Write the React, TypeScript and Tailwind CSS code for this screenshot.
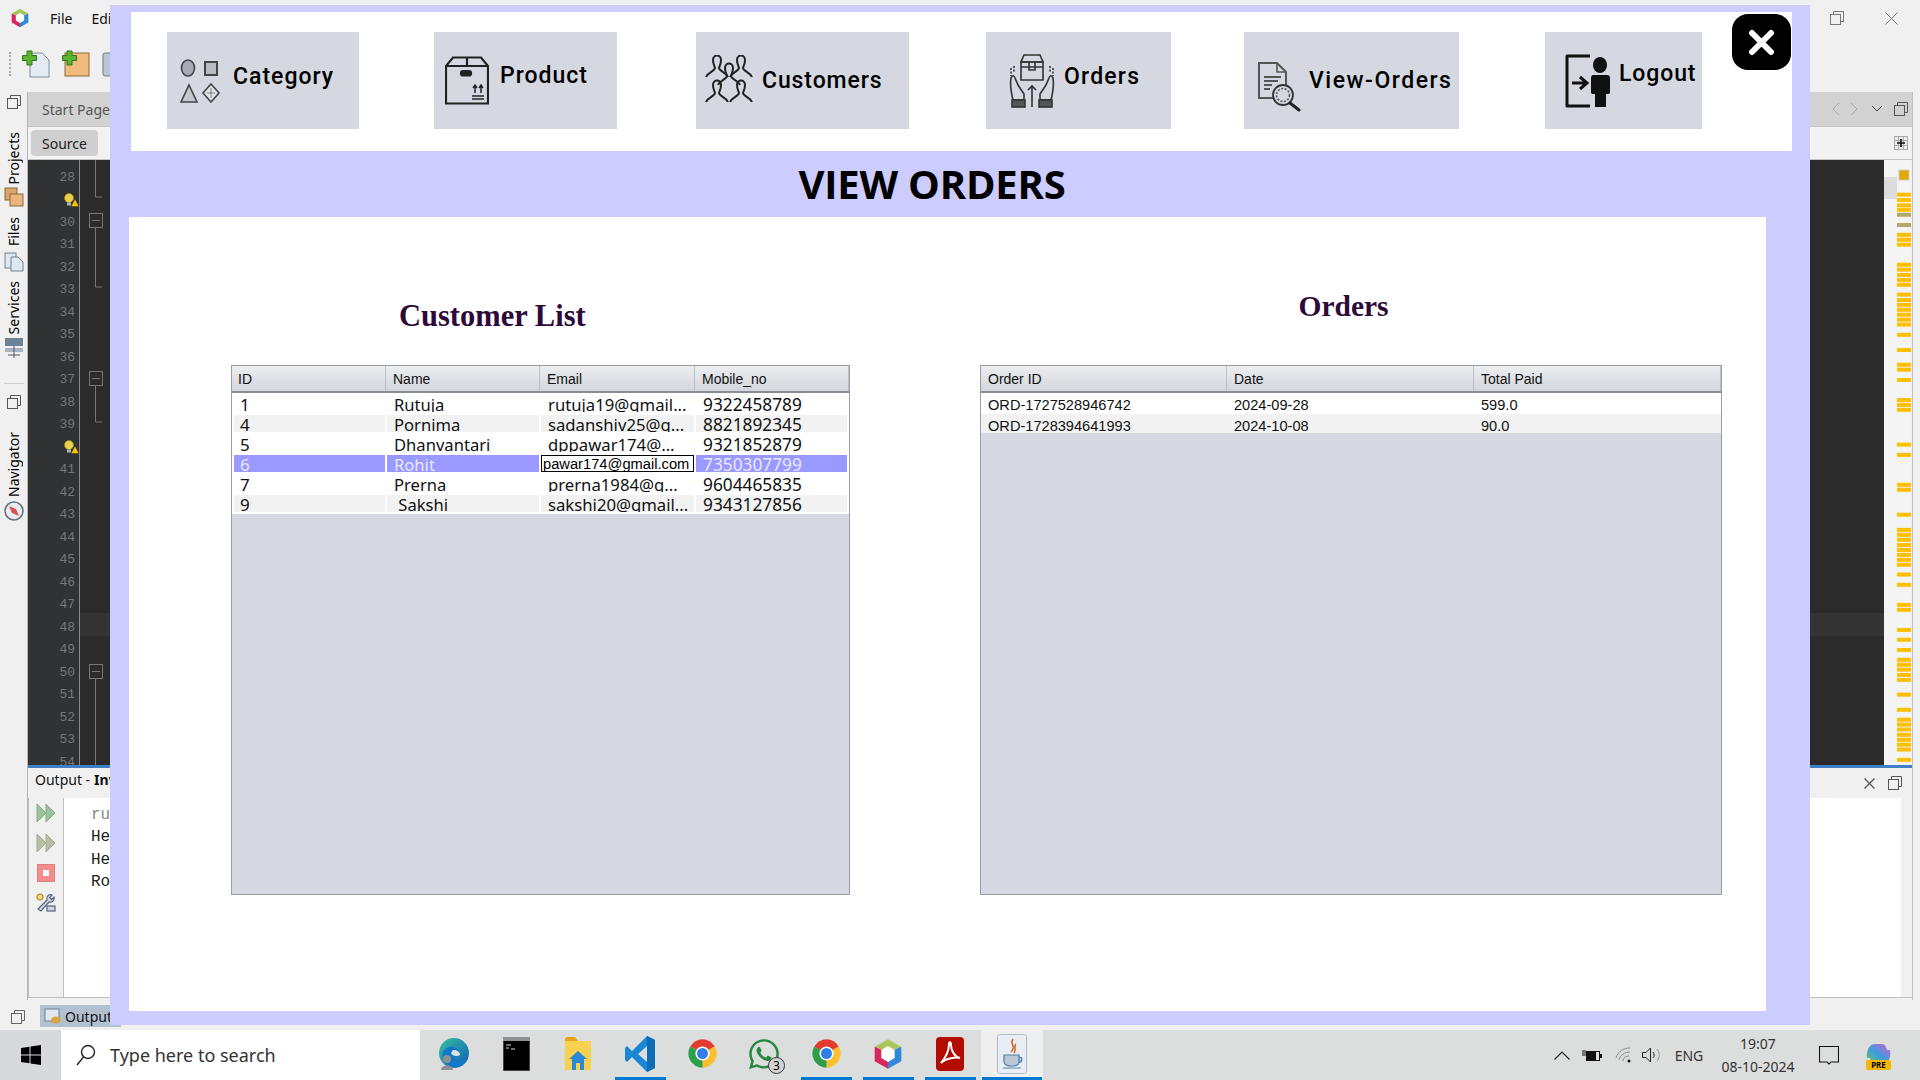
import React from "react";
import { FaWhatsapp } from "react-icons/fa";

const customers = [
  { id: "1", name: "Rutuja", email: "rutuja19@gmail...", mobile: "9322458789" },
  { id: "4", name: "Pornima", email: "sadanshiv25@g...", mobile: "8821892345" },
  { id: "5", name: "Dhanvantari", email: "dppawar174@...", mobile: "9321852879" },
  { id: "6", name: "Rohit", email: "pawar174@gmail.com", mobile: "7350307799" },
  { id: "7", name: "Prerna", email: "prerna1984@g...", mobile: "9604465835" },
  { id: "9", name: "\u00a0Sakshi", email: "sakshi20@gmail...", mobile: "9343127856" },
];

const orders = [
  { id: "ORD-1727528946742", date: "2024-09-28", paid: "599.0" },
  { id: "ORD-1728394641993", date: "2024-10-08", paid: "90.0" },
];

const lineNumbers = Array.from({ length: 27 }, (_, i) => 28 + i);

const stripes = [
  212, 224, 236, 246, 302, 313, 324, 369, 380, 392, 403, 414, 436, 448, 459, 470, 481, 492, 503, 526, 560, 593, 604,
  627, 672, 683, 694, 772, 795, 862, 873, 929, 963, 974, 985, 997, 1008, 1019, 1030, 1041, 1063, 1086, 1131, 1142,
  1187, 1209, 1232, 1254, 1265, 1276, 1288, 1299, 1332, 1366, 1388, 1399, 1410, 1422, 1433, 1444, 1455, 1478,
];

function RestoreIcon({ color = "#777" }: { color?: string }) {
  return (
    <svg width="14" height="14" viewBox="0 0 14 14" fill="none" stroke={color} strokeWidth="1">
      <rect x="0.5" y="3.5" width="10" height="10" />
      <path d="M3.5 3.5V0.5H13.5V10.5H10.5" />
    </svg>
  );
}

function NetBeansLogo({ size = 20 }: { size?: number }) {
  return (
    <svg width={size} height={size} viewBox="0 0 24 24">
      <path d="M12 1 22 6.5 12 11 2 6.5Z" fill="#a8c65a" />
      <path d="M2 6.5 12 11V23L2 17.5Z" fill="#d8275f" />
      <path d="M22 6.5 12 11V23L22 17.5Z" fill="#2f88d8" />
      <path d="M12 6 17 9 17 15 12 18 7 15 7 9Z" fill="#fff" />
    </svg>
  );
}

function Chrome() {
  return (
    <svg width="31" height="31" viewBox="0 0 48 48">
      <path d="M24 24 5 13A22 22 0 0 1 43 13Z" fill="#e33b2e" />
      <path d="M24 24 43 13A22 22 0 0 1 24 46Z" fill="#fbc02d" />
      <path d="M24 24 24 46A22 22 0 0 1 5 13Z" fill="#2e9e48" />
      <circle cx="24" cy="24" r="11" fill="#fff" />
      <circle cx="24" cy="24" r="8.5" fill="#2f7fe6" />
    </svg>
  );
}

function Bulb() {
  return (
    <svg width="15" height="14" viewBox="0 0 15 14">
      <circle cx="5" cy="5" r="4.5" fill="#e8d24a" stroke="#9b8a20" strokeWidth="0.6" />
      <rect x="3" y="9.5" width="4" height="3" fill="#aab0c0" />
      <path d="M11 6 15 13.5H7Z" fill="#f5c400" stroke="#222" strokeWidth="0.4" />
    </svg>
  );
}

function SideLabel({ text, className }: { text: string; className: string }) {
  return (
    <span className={`[writing-mode:vertical-rl] rotate-180 text-[14px] leading-[16px] text-black ${className}`}>
      {text}
    </span>
  );
}

function CategoryIcon() {
  return (
    <svg width="41" height="44" viewBox="0 0 41 44" fill="none" stroke="#444" strokeWidth="1.6">
      <ellipse cx="8" cy="9" rx="6.5" ry="8" fill="#a9acb4" />
      <rect x="25" y="3" width="12" height="13" fill="#b9bcc4" strokeWidth="2" />
      <path d="M9 26 17 43H1Z" fill="#c4c7cf" />
      <path d="M31 25 39 34 31 43 23 34Z" fill="#e0e2e8" />
      <path d="M31 29V39M27 34H35" strokeWidth="0.6" />
    </svg>
  );
}

function ProductIcon() {
  return (
    <svg width="44" height="49" viewBox="0 0 44 49" fill="none" stroke="#222" strokeWidth="2.2">
      <path d="M8 1.5H36L43 10V47.5H1V10Z" />
      <path d="M1 10H43M22 1.5V10" />
      <rect x="16" y="15" width="10" height="4.5" rx="2" fill="#222" />
      <path d="M27 40H39M30 37V30M36 37V30M28 32 30 29 32 32M34 32 36 29 38 32M27 43H39" strokeWidth="1.5" />
    </svg>
  );
}

function CustomersIcon() {
  const person = "M-4 -9C-4 -15 4 -15 4 -9C4 -5 2.5 -3 2 -1C2 2 9 3 11 8M-4 -9C-4 -5 -2.5 -3 -2 -1C-2 2 -9 3 -11 8";
  return (
    <svg width="48" height="51" viewBox="0 0 48 51" fill="none" stroke="#222" strokeWidth="2">
      <path d={person} transform="translate(12 14)" />
      <path d={person} transform="translate(36 14)" />
      <path d={person} transform="translate(24 22)" />
      <path d={person} transform="translate(12 39)" />
      <path d={person} transform="translate(36 39)" />
    </svg>
  );
}

function OrdersIcon() {
  return (
    <svg width="46" height="54" viewBox="0 0 46 54" fill="none" stroke="#333" strokeWidth="1.6">
      <path d="M12 8H34V26H12Z" />
      <path d="M15 1H31L34 8H12ZM12 13H34M20 8V16H26V8" />
      <path d="M2 14V22M5 12V18M41 12V18M44 14V22" strokeDasharray="2 1.5" />
      <path d="M2 24C1 30 2 38 4 46H15V40L9 31 6 24C5 21 3 21 2 24ZM44 24C45 30 44 38 42 46H31V40L37 31 40 24C41 21 43 21 44 24Z" />
      <path d="M23 32V53M19 36 23 32 27 36" />
      <rect x="3" y="46" width="13" height="7" fill="#555" />
      <rect x="30" y="46" width="13" height="7" fill="#555" />
    </svg>
  );
}

function ViewOrdersIcon() {
  return (
    <svg className="mt-[12px]" width="44" height="50" viewBox="0 0 44 50" fill="none" stroke="#555" strokeWidth="1.6">
      <path d="M1 1H19L28 10V36H1Z" fill="#d5d8e0" strokeWidth="2" />
      <path d="M19 1V10H28" />
      <path d="M6 15H23M6 19H20M6 23H14M6 27H12" strokeWidth="1.8" />
      <circle cx="25" cy="33" r="10" fill="#d5d8e0" stroke="#333" strokeWidth="1.8" />
      <circle cx="25" cy="33" r="6.5" strokeDasharray="2 1.5" />
      <path d="M32 41 41 48" stroke="#222" strokeWidth="3" strokeLinecap="round" />
    </svg>
  );
}

function LogoutIcon() {
  return (
    <svg width="46" height="54" viewBox="0 0 46 54">
      <path d="M26 2H3V52H26" fill="none" stroke="#111" strokeWidth="3" strokeLinejoin="round" />
      <path d="M8 29H22M16 23 23 29 16 35" fill="none" stroke="#111" strokeWidth="3" />
      <ellipse cx="36" cy="11" rx="7" ry="8" fill="#111" />
      <path d="M29 21H43C45 21 46 22 46 24V38C46 40 45 40 42 40V53H31V40C28 40 27 40 27 38V24C27 22 28 21 29 21Z" fill="#111" />
    </svg>
  );
}

function NavButton({
  label,
  icon,
  className,
  textClass,
}: {
  label: string;
  icon: React.ReactNode;
  className: string;
  textClass: string;
}) {
  return (
    <div className={`h-[97px] bg-[#d5d8e0] flex items-center shrink-0 ${className}`}>
      {icon}
      <span className={`font-['Roboto',sans-serif] font-medium text-[23px] leading-none text-black ${textClass}`}>
        {label}
      </span>
    </div>
  );
}

function TaskIcon({ children, active, current }: { children: React.ReactNode; active?: boolean; current?: boolean }) {
  return (
    <div className={`w-[62px] h-full flex flex-col items-center ${current ? "bg-[#efefef]" : ""}`}>
      <div className="flex-1 flex items-center justify-center relative">{children}</div>
      <div className={`h-[3px] ${current ? "w-[60px]" : "w-[51px]"} ${active ? "bg-[#0078d4]" : ""}`} />
    </div>
  );
}

export default function App() {
  return (
    <div className="relative w-[1920px] h-[1080px] overflow-hidden flex flex-col bg-[#f0f0f0] font-['Noto_Sans',sans-serif]">
      {/* IDE behind the dialog */}
      <div className="h-[36px] flex items-center shrink-0 text-[14px] text-[#111]">
        <div className="ml-[10px] w-[40px]">
          <NetBeansLogo />
        </div>
        <span>File</span>
        <span className="ml-[19px]">Edit</span>
        <div className="ml-auto flex items-center">
          <RestoreIcon />
          <svg className="ml-[41px] mr-[22px]" width="13" height="13" viewBox="0 0 13 13" stroke="#777" fill="none">
            <path d="M0.5 0.5 12.5 12.5M12.5 0.5 0.5 12.5" />
          </svg>
        </div>
      </div>

      <div className="h-[56px] flex items-center shrink-0 pl-[9px]">
        <div className="w-[3px] h-[24px] border-l-2 border-dotted border-[#aaa]" />
        <svg className="ml-[10px]" width="28" height="28" viewBox="0 0 28 28">
          <path d="M8 3H20L27 10V27H8Z" fill="#e4ebf4" stroke="#7f8c9c" />
          <path d="M5 1H10V5.5H14.5V10.5H10V15H5V10.5H0.5V5.5H5Z" fill="#5cb531" stroke="#2f7a18" />
        </svg>
        <svg className="ml-[12px]" width="28" height="28" viewBox="0 0 28 28">
          <rect x="3" y="3" width="24" height="23" fill="#f2bb7e" stroke="#8a6a3e" />
          <path d="M5 1H10V5.5H14.5V10.5H10V15H5V10.5H0.5V5.5H5Z" fill="#5cb531" stroke="#2f7a18" />
        </svg>
        <svg className="ml-[12px]" width="20" height="28" viewBox="0 0 20 28">
          <rect x="1" y="3" width="18" height="23" rx="2" fill="#b9c6d6" stroke="#6d7c8c" />
        </svg>
      </div>

      <div className="h-[908px] flex shrink-0">
        {/* side tabs */}
        <div className="w-[28px] shrink-0 flex flex-col items-center border-r border-[#b5b5b5]">
          <div className="h-[12px] mt-[5px]">
            <div className="-mt-[2px]">
              <RestoreIcon color="#555" />
            </div>
          </div>
          <SideLabel text="Projects" className="mt-[23px]" />
          <svg className="mt-[3px]" width="20" height="20" viewBox="0 0 20 20">
            <rect x="1" y="1" width="12" height="12" fill="#d8a468" stroke="#8a6a3e" />
            <rect x="6" y="7" width="13" height="12" fill="#eab47a" stroke="#8a6a3e" />
          </svg>
          <SideLabel text="Files" className="mt-[10px]" />
          <svg className="mt-[5px]" width="20" height="20" viewBox="0 0 20 20" fill="#dfe7f1" stroke="#708090">
            <rect x="1" y="1" width="11" height="15" />
            <path d="M7 5H14L19 10V19H7Z" />
          </svg>
          <SideLabel text="Services" className="mt-[9px]" />
          <svg className="mt-[3px]" width="20" height="22" viewBox="0 0 20 22">
            <rect x="1" y="1" width="18" height="8" fill="#6d8296" />
            <rect x="1" y="11" width="18" height="4" fill="#a8b4c0" />
            <path d="M10 9V21M4 18H16" stroke="#556" />
          </svg>
          <div className="w-[20px] h-[1px] bg-[#ccc] mt-[24px]" />
          <div className="mt-[11px]">
            <RestoreIcon color="#555" />
          </div>
          <SideLabel text="Navigator" className="mt-[23px]" />
          <svg className="mt-[4px]" width="20" height="20" viewBox="0 0 20 20">
            <circle cx="10" cy="10" r="9" fill="#e8edf2" stroke="#66707a" strokeWidth="1.5" />
            <path d="M5 5 12 8 15 15 8 12Z" fill="#d9534f" />
          </svg>
        </div>

        {/* editor and output */}
        <div className="w-[1885px] shrink-0 flex flex-col border-r border-[#c0c0c0]">
          <div className="h-[34px] bg-[#d2d2d2] flex items-center pl-[14px] text-[14px] text-[#555]">
            <span>Start Page</span>
            <div className="ml-auto flex items-center pr-[4px]">
              <svg width="10" height="14" viewBox="0 0 10 14" fill="none" stroke="#aaa">
                <path d="M8 1 2 7 8 13" />
              </svg>
              <svg className="ml-[8px]" width="10" height="14" viewBox="0 0 10 14" fill="none" stroke="#aaa">
                <path d="M2 1 8 7 2 13" />
              </svg>
              <svg className="ml-[12px]" width="12" height="8" viewBox="0 0 12 8" fill="none" stroke="#444">
                <path d="M1 1 6 6 11 1" />
              </svg>
              <div className="ml-[11px]">
                <RestoreIcon color="#555" />
              </div>
            </div>
          </div>
          <div className="h-[34px] bg-[#f2f2f2] border-y border-[#c4c4c4] flex items-center pl-[3px] text-[14px] text-[#222]">
            <div className="w-[67px] h-[26px] rounded-[4px] bg-[#cfcfcf] flex items-center justify-center">Source</div>
            <svg className="ml-auto mr-[4px]" width="14" height="14" viewBox="0 0 14 14">
              <rect x="0.5" y="0.5" width="13" height="13" fill="#eee" stroke="#aaa" />
              <path d="M1 4.5H13M1 9.5H13M4.5 1V13M9.5 1V13" stroke="#aaa" />
              <path d="M7 3V11M3 7H11" stroke="#111" strokeWidth="1.6" />
            </svg>
          </div>
          <div className="h-[605px] flex">
            <div className="w-[52px] bg-[#303234] border-r border-[#8a8a8a] overflow-hidden pt-[6px] shrink-0">
              {lineNumbers.map((n) => (
                <div
                  key={n}
                  className="h-[22.5px] flex items-center justify-end pr-[4px] font-['Liberation_Mono',monospace] text-[13px] text-[#75787b]"
                >
                  {n === 29 || n === 40 ? (
                    <div className="-mr-[4px]">
                      <Bulb />
                    </div>
                  ) : (
                    n
                  )}
                </div>
              ))}
            </div>
            <svg className="w-[1804px] h-[605px] shrink-0" viewBox="0 0 1804 605" fill="none" stroke="#777">
              <rect width="1804" height="605" fill="#2b2b2b" stroke="none" />
              <rect y="453" width="1804" height="23" fill="#343434" stroke="none" />
              <path d="M15.5 0V37H22" />
              <rect x="9.5" y="53.5" width="13" height="14" />
              <path d="M12 60.5H20M15.5 67V127H22" />
              <rect x="9.5" y="211.5" width="13" height="14" />
              <path d="M12 218.5H20M15.5 225V262H22" />
              <rect x="9.5" y="504.5" width="13" height="14" />
              <path d="M12 511.5H20M15.5 518V605" />
            </svg>
            <div className="w-[13px] bg-[#f4f4f4] shrink-0 pt-[17px]">
              <div className="h-[22px] bg-[#dcdcdc]" />
            </div>
            <svg className="w-[14px] h-[605px] shrink-0" viewBox="0 0 14 605">
              <rect width="14" height="605" fill="#f4f4f4" />
              <rect x="2" y="10" width="10" height="10" fill="#e0a800" stroke="#ccc" />
              {stripes.map((v) => (
                <rect key={v} y={100 + v / 2.24 - 162} width="14" height="4" fill="#ffbf00" />
              ))}
              <rect y={100 + 257 / 2.24 - 162} width="14" height="4" fill="#b0aa6a" />
              <rect y={100 + 280 / 2.24 - 162} width="14" height="4" fill="#b0aa6a" />
            </svg>
          </div>
          <div className="h-[3px] bg-[#3d80c4] shrink-0" />
          <div className="h-[30px] flex items-center pl-[7px] pb-[7px] text-[14px] text-[#111] shrink-0">
            <span>Output - </span>
            <span className="font-bold ml-[4px]">Invoice</span>
            <div className="ml-auto flex items-center pr-[10px] pt-[7px]">
              <svg width="11" height="11" viewBox="0 0 11 11" fill="none" stroke="#555" strokeWidth="1.3">
                <path d="M0.5 0.5 10.5 10.5M10.5 0.5 0.5 10.5" />
              </svg>
              <div className="ml-[13px]">
                <RestoreIcon color="#555" />
              </div>
            </div>
          </div>
          <div className="h-[200px] flex shrink-0 border-l border-b border-[#c0c0c0]">
            <div className="w-[35px] border-r border-[#c0c0c0] flex flex-col items-center pt-[5px] shrink-0">
              <svg width="20" height="20" viewBox="0 0 20 20" fill="#9cc49c" stroke="#88aa88">
                <path d="M1 1 10 10 1 19ZM10 1 19 10 10 19Z" />
              </svg>
              <svg className="mt-[10px]" width="20" height="20" viewBox="0 0 20 20" fill="#b7bda3" stroke="#a5aa95">
                <path d="M1 1 10 10 1 19ZM10 1 19 10 10 19Z" />
              </svg>
              <svg className="mt-[11px]" width="18" height="18" viewBox="0 0 18 18">
                <rect width="18" height="18" fill="#f58c8c" stroke="#cc7777" />
                <rect x="6" y="6" width="6" height="6" fill="#fff" />
              </svg>
              <svg className="mt-[11px]" width="20" height="20" viewBox="0 0 20 20" fill="#cfd6de" stroke="#56657a" strokeWidth="1.2">
                <circle cx="4" cy="4" r="3" stroke="#b8860b" fill="#f2d98a" />
                <path d="M2 16 11 7C10 3 13 1 16 2L13.5 4.5 15.5 6.5 18 4C19 7 16 10 13 9L5 18Z" />
                <rect x="11" y="13" width="8" height="5" />
              </svg>
            </div>
            <div className="flex-1 bg-white pl-[27px] pt-[6px] font-['Liberation_Mono',monospace] text-[16px] leading-[22.4px] text-[#222] mr-[11px]">
              <div className="text-[#888]">run:</div>
              <div>Hello</div>
              <div>Hello</div>
              <div>Rohit</div>
            </div>
          </div>
        </div>
      </div>

      <div className="flex-1 flex items-start pt-[5px] pl-[11px]">
        <div className="mt-[5px]">
          <RestoreIcon color="#666" />
        </div>
        <div className="ml-[15px] w-[81px] h-[22px] bg-[#b3c0cf] flex items-center pl-[4px] text-[14px] text-[#111]">
          <svg width="18" height="18" viewBox="0 0 18 18">
            <rect x="1" y="2" width="14" height="12" fill="#dfe7f1" stroke="#708090" />
            <ellipse cx="12" cy="13" rx="5" ry="3.5" fill="#d9a441" />
          </svg>
          <span className="ml-[3px]">Output</span>
        </div>
      </div>

      {/* taskbar */}
      <div className="h-[50px] shrink-0 bg-[#dcdddd] flex items-stretch text-[#222]">
        <div className="w-[61px] flex items-center justify-center bg-[#d8d9dc]">
          <svg width="20" height="20" viewBox="0 0 20 20" fill="#000">
            <path d="M0 3 8.5 1.8V9.5H0ZM9.5 1.6 20 0V9.5H9.5ZM0 10.5H8.5V18.2L0 17ZM9.5 10.5H20V20L9.5 18.4Z" />
          </svg>
        </div>
        <div className="w-[359px] bg-white flex items-center pl-[15px] shrink-0">
          <svg width="20" height="22" viewBox="0 0 20 22" fill="none" stroke="#222" strokeWidth="1.4">
            <circle cx="12" cy="8" r="6.5" />
            <path d="M7.5 13 1 21" />
          </svg>
          <span className="ml-[14px] text-[18px] text-[#333]">Type here to search</span>
        </div>
        <div className="ml-[3px] flex items-stretch">
          <TaskIcon>
            <svg width="32" height="34" viewBox="0 0 32 34">
              <defs>
                <linearGradient id="edge" x1="0" y1="0" x2="1" y2="1">
                  <stop offset="0" stopColor="#35c1a0" />
                  <stop offset="1" stopColor="#0d5fb8" />
                </linearGradient>
              </defs>
              <circle cx="16" cy="16" r="15" fill="url(#edge)" />
              <path d="M5 15C8 8 20 8 22 16C22 20 16 21 14 19C18 24 26 25 30 21C27 29 19 32 13 30C6 27 3 21 5 15Z" fill="#1277c9" />
              <path d="M15 13C19 13 22 15 22 18C19 20 14 19 13 16Z" fill="#dfe4e8" />
              <circle cx="9" cy="22" r="4" fill="#8f8f8f" />
              <path d="M3 33C3 27 15 27 15 33Z" fill="#8f8f8f" />
            </svg>
          </TaskIcon>
          <TaskIcon>
            <svg width="27" height="34" viewBox="0 0 27 34">
              <rect width="27" height="34" fill="#000" stroke="#888" />
              <rect x="0" y="0" width="27" height="4" fill="#8d9196" />
              <path d="M3 8H8M3 11H6M8 12H12" stroke="#ddd" />
            </svg>
          </TaskIcon>
          <TaskIcon>
            <svg width="28" height="33" viewBox="0 0 28 33">
              <path d="M1 3C1 1 2 0 4 0H11L14 4H1Z" fill="#e8a31e" />
              <rect x="1" y="4" width="26" height="29" fill="#f8d24e" />
              <path d="M14 14 23 22H20V33H8V22H5Z" fill="#2b88d8" />
              <rect x="12" y="26" width="4" height="7" fill="#f8d24e" />
            </svg>
          </TaskIcon>
          <TaskIcon active>
            <svg width="30" height="38" viewBox="0 0 30 38">
              <path d="M22 1 30 5V33L22 37 7 22 2 27 0 25V13L2 11 7 16ZM22 11 13 19 22 27Z" fill="#1a87d6" />
              <path d="M22 1 30 5V33L22 37Z" fill="#0d6cb5" />
            </svg>
          </TaskIcon>
          <TaskIcon>
            <Chrome />
          </TaskIcon>
          <TaskIcon>
            <FaWhatsapp className="text-[#25893f] w-[32px] h-[34px]" />
            <span className="absolute right-[-5px] bottom-[3px] w-[17px] h-[17px] rounded-full bg-[#d4d4d4] border border-[#333] text-[12px] leading-[15px] text-center text-black">
              3
            </span>
          </TaskIcon>
          <TaskIcon active>
            <Chrome />
          </TaskIcon>
          <TaskIcon active>
            <NetBeansLogo size={32} />
          </TaskIcon>
          <TaskIcon active>
            <svg width="28" height="34" viewBox="0 0 28 34">
              <rect width="28" height="34" rx="4" fill="#b30b00" />
              <path d="M5 26C10 20 13 12 13 7C13 4 15 5 15 8C15 14 19 20 24 21C20 20 10 21 5 26Z" fill="none" stroke="#fff" strokeWidth="2" />
            </svg>
          </TaskIcon>
          <TaskIcon active current>
            <svg width="30" height="40" viewBox="0 0 30 40">
              <rect x="0.5" y="0.5" width="29" height="39" rx="2" fill="#e8eef4" stroke="#b0bcc8" />
              <path d="M16 5C12 10 20 12 14 18M19 10C16 13 20 15 17 19" fill="none" stroke="#d8662a" strokeWidth="1.6" />
              <path d="M7 21H22V28C22 31 19 32 15 32C11 32 7 31 7 28ZM22 23C26 23 26 28 21 29M6 34H24" fill="#b9c8d6" stroke="#4f7ea8" strokeWidth="1.2" />
            </svg>
          </TaskIcon>
        </div>

        <div className="ml-auto flex items-center pr-[18px] text-[14px] text-[#333]">
          <div className="w-[30px] flex justify-center">
            <svg width="16" height="9" viewBox="0 0 16 9" fill="none" stroke="#222" strokeWidth="1.2">
              <path d="M0.5 8.5 8 1 15.5 8.5" />
            </svg>
          </div>
          <div className="w-[30px] flex justify-center">
            <svg width="20" height="13" viewBox="0 0 20 13">
              <rect x="4.5" y="2.5" width="13" height="9" fill="none" stroke="#111" />
              <rect x="5" y="3" width="9" height="8" fill="#111" />
              <rect x="18" y="5" width="2" height="4" fill="#111" />
              <path d="M0 6H4M1 1V5M3 1V5" stroke="#111" />
            </svg>
          </div>
          <div className="w-[31px] flex justify-center">
            <svg width="16" height="16" viewBox="0 0 16 16" fill="none" stroke="#888">
              <path d="M1 11C3 4 9 1 15 1M4 13C5 8 10 5 15 5M8 14C8 11 11 9 14 9" />
              <circle cx="14" cy="14" r="1.5" fill="#111" stroke="none" />
            </svg>
          </div>
          <div className="w-[28px] flex justify-center">
            <svg width="20" height="16" viewBox="0 0 20 16" fill="none" stroke="#222">
              <path d="M0.5 5.5H4L8.5 1V15L4 10.5H0.5Z" />
              <path d="M11 5C12.5 7 12.5 9 11 11" />
              <path d="M15 2C18 6 18 10 15 14" stroke="#999" />
            </svg>
          </div>
          <div className="w-[46px] text-center">ENG</div>
          <div className="w-[92px] text-center leading-[23px]">
            <div>19:07</div>
            <div>08-10-2024</div>
          </div>
          <div className="w-[50px] flex justify-center">
            <svg width="20" height="20" viewBox="0 0 20 20" fill="none" stroke="#111" strokeWidth="1.1">
              <path d="M0.5 1.5H19.5V17H12L10 19 8 17H0.5Z" />
            </svg>
          </div>
          <div className="w-[48px] flex justify-center relative">
            <svg width="25" height="22" viewBox="0 0 25 22">
              <defs>
                <linearGradient id="cop" x1="0" y1="1" x2="1" y2="0">
                  <stop offset="0" stopColor="#7cc243" />
                  <stop offset="0.45" stopColor="#3aa0e0" />
                  <stop offset="1" stopColor="#d05cd8" />
                </linearGradient>
              </defs>
              <path d="M9 0H16C19 0 20 3 21 6H24C25 12 23 20 18 20H8C4 20 5 16 4 14H1C0 8 3 0 9 0Z" fill="url(#cop)" />
            </svg>
            <span className="absolute left-[12px] -bottom-[4px] w-[25px] h-[10px] rounded-[2px] bg-[#f5b800] text-[8px] leading-[10px] font-bold text-center text-black">
              PRE
            </span>
          </div>
        </div>
      </div>

      {/* dialog */}
      <div className="absolute left-[110px] top-[5px] w-[1700px] h-[1020px] bg-[#ccccff] pt-[7px]">
        <div className="relative ml-[21px] w-[1661px] h-[139px] bg-white flex pt-[20px] pl-[36px]">
          <NavButton
            label="Category"
            icon={<CategoryIcon />}
            className="w-[192px] pl-[13px]"
            textClass="ml-[12px] -mt-[8px] tracking-[1px]"
          />
          <NavButton
            label="Product"
            icon={<ProductIcon />}
            className="ml-[75px] w-[183px] pl-[11px]"
            textClass="ml-[11px] -mt-[10px] tracking-[1px]"
          />
          <NavButton
            label="Customers"
            icon={<CustomersIcon />}
            className="ml-[79px] w-[213px] pl-[9px]"
            textClass="ml-[9px] tracking-[0.9px]"
          />
          <NavButton
            label="Orders"
            icon={<OrdersIcon />}
            className="ml-[77px] w-[185px] pl-[23px]"
            textClass="ml-[9px] -mt-[8px] tracking-[1.2px]"
          />
          <NavButton
            label="View-Orders"
            icon={<ViewOrdersIcon />}
            className="ml-[73px] w-[215px] pl-[14px]"
            textClass="ml-[7px] tracking-[1.5px]"
          />
          <NavButton
            label="Logout"
            icon={<LogoutIcon />}
            className="ml-[86px] w-[157px] pl-[19px]"
            textClass="ml-[9px] -mt-[14px] tracking-[0.9px]"
          />
          <div className="absolute left-[1601px] top-[2px] w-[59px] h-[56px] rounded-[16px] bg-black flex items-center justify-center">
            <svg width="27" height="27" viewBox="0 0 27 27" stroke="#fff" strokeWidth="6" strokeLinecap="round">
              <path d="M4 4 23 23M23 4 4 23" />
            </svg>
          </div>
        </div>

        <div className="h-[66px] w-[1644px] flex items-center justify-center">
          <h1 className="font-['Open_Sans',sans-serif] font-bold text-[40px] leading-none tracking-[-0.2px] text-black">
            VIEW ORDERS
          </h1>
        </div>

        <div className="ml-[19px] w-[1637px] h-[794px] bg-white flex pl-[102px]">
          <div className="w-[619px] shrink-0">
            <div className="h-[148px] pt-[82px] pl-[168px]">
              <h2 className="font-['Liberation_Serif',serif] font-bold text-[30.5px] leading-[34px] text-[#2d0a3a]">
                Customer List
              </h2>
            </div>
            <div className="h-[530px] bg-[#d5d8e0] border border-[#9a9ca6]">
              <div className="h-[27px] grid grid-cols-[154px_154px_155px_154px] border-b-2 border-[#8a8c96] bg-gradient-to-b from-[#eceef1] to-[#d3d6dc] font-['Liberation_Sans',sans-serif] text-[14px] text-[#111]">
                {["ID", "Name", "Email", "Mobile_no"].map((h, i) => (
                  <div
                    key={h}
                    className={`pt-[2px] flex items-center border-r border-[#bcbfc8] ${i === 0 ? "pl-[6px]" : "pl-[7px]"}`}
                  >
                    {h}
                  </div>
                ))}
              </div>
              <div className="h-[121px] bg-white pt-[2px] overflow-hidden">
                {customers.map((c, i) => {
                  const selected = c.id === "6";
                  const band = selected ? "bg-[#9999ff] text-[#e8e8ff]" : i % 2 === 1 ? "bg-[#f2f2f2] text-[#111]" : "text-[#111]";
                  const cell = `h-[17px] overflow-hidden whitespace-nowrap pt-[1px] leading-[17px] ${band}`;
                  return (
                    <div key={c.id} className="h-[20px] grid grid-cols-[151px_152px_153px_151px] gap-x-[2px] pl-[2px]">
                      <div className={`${cell} pl-[6px] text-[17px]`}>{c.id}</div>
                      <div className={`${cell} pl-[7px] text-[16.6px]`}>{c.name}</div>
                      {selected ? (
                        <div className="h-[17px] overflow-hidden whitespace-nowrap bg-white border border-black pl-[1px] font-['Liberation_Sans',sans-serif] text-[14.7px] leading-[17px] text-black">
                          {c.email}
                        </div>
                      ) : (
                        <div className={`${cell} pl-[7px] text-[16.7px]`}>{c.email}</div>
                      )}
                      <div className={`${cell} pl-[7px] text-[17.3px]`}>{c.mobile}</div>
                    </div>
                  );
                })}
              </div>
            </div>
          </div>

          <div className="ml-[130px] w-[742px] shrink-0">
            <div className="h-[148px] pt-[72px] pr-[15px] text-center">
              <h2 className="font-['Liberation_Serif',serif] font-bold text-[29.5px] leading-[34px] text-[#2d0a3a]">
                Orders
              </h2>
            </div>
            <div className="h-[530px] bg-[#d5d8e0] border border-[#9a9ca6]">
              <div className="h-[27px] grid grid-cols-[246px_247px_247px] border-b-2 border-[#8a8c96] bg-gradient-to-b from-[#eceef1] to-[#d3d6dc] font-['Liberation_Sans',sans-serif] text-[14px] text-[#111]">
                {["Order ID", "Date", "Total Paid"].map((h) => (
                  <div key={h} className="pl-[7px] pt-[2px] flex items-center border-r border-[#bcbfc8]">
                    {h}
                  </div>
                ))}
              </div>
              {orders.map((o, i) => (
                <div
                  key={o.id}
                  className={`grid grid-cols-[246px_247px_247px] items-center pt-[2px] font-['Liberation_Sans',sans-serif] text-[14.6px] text-[#111] ${
                    i === 0 ? "h-[21px] bg-white" : "h-[19px] bg-[#f2f2f2]"
                  }`}
                >
                  <div className="pl-[7px]">{o.id}</div>
                  <div className="pl-[7px]">{o.date}</div>
                  <div className="pl-[7px]">{o.paid}</div>
                </div>
              ))}
            </div>
          </div>
        </div>
      </div>
    </div>
  );
}
